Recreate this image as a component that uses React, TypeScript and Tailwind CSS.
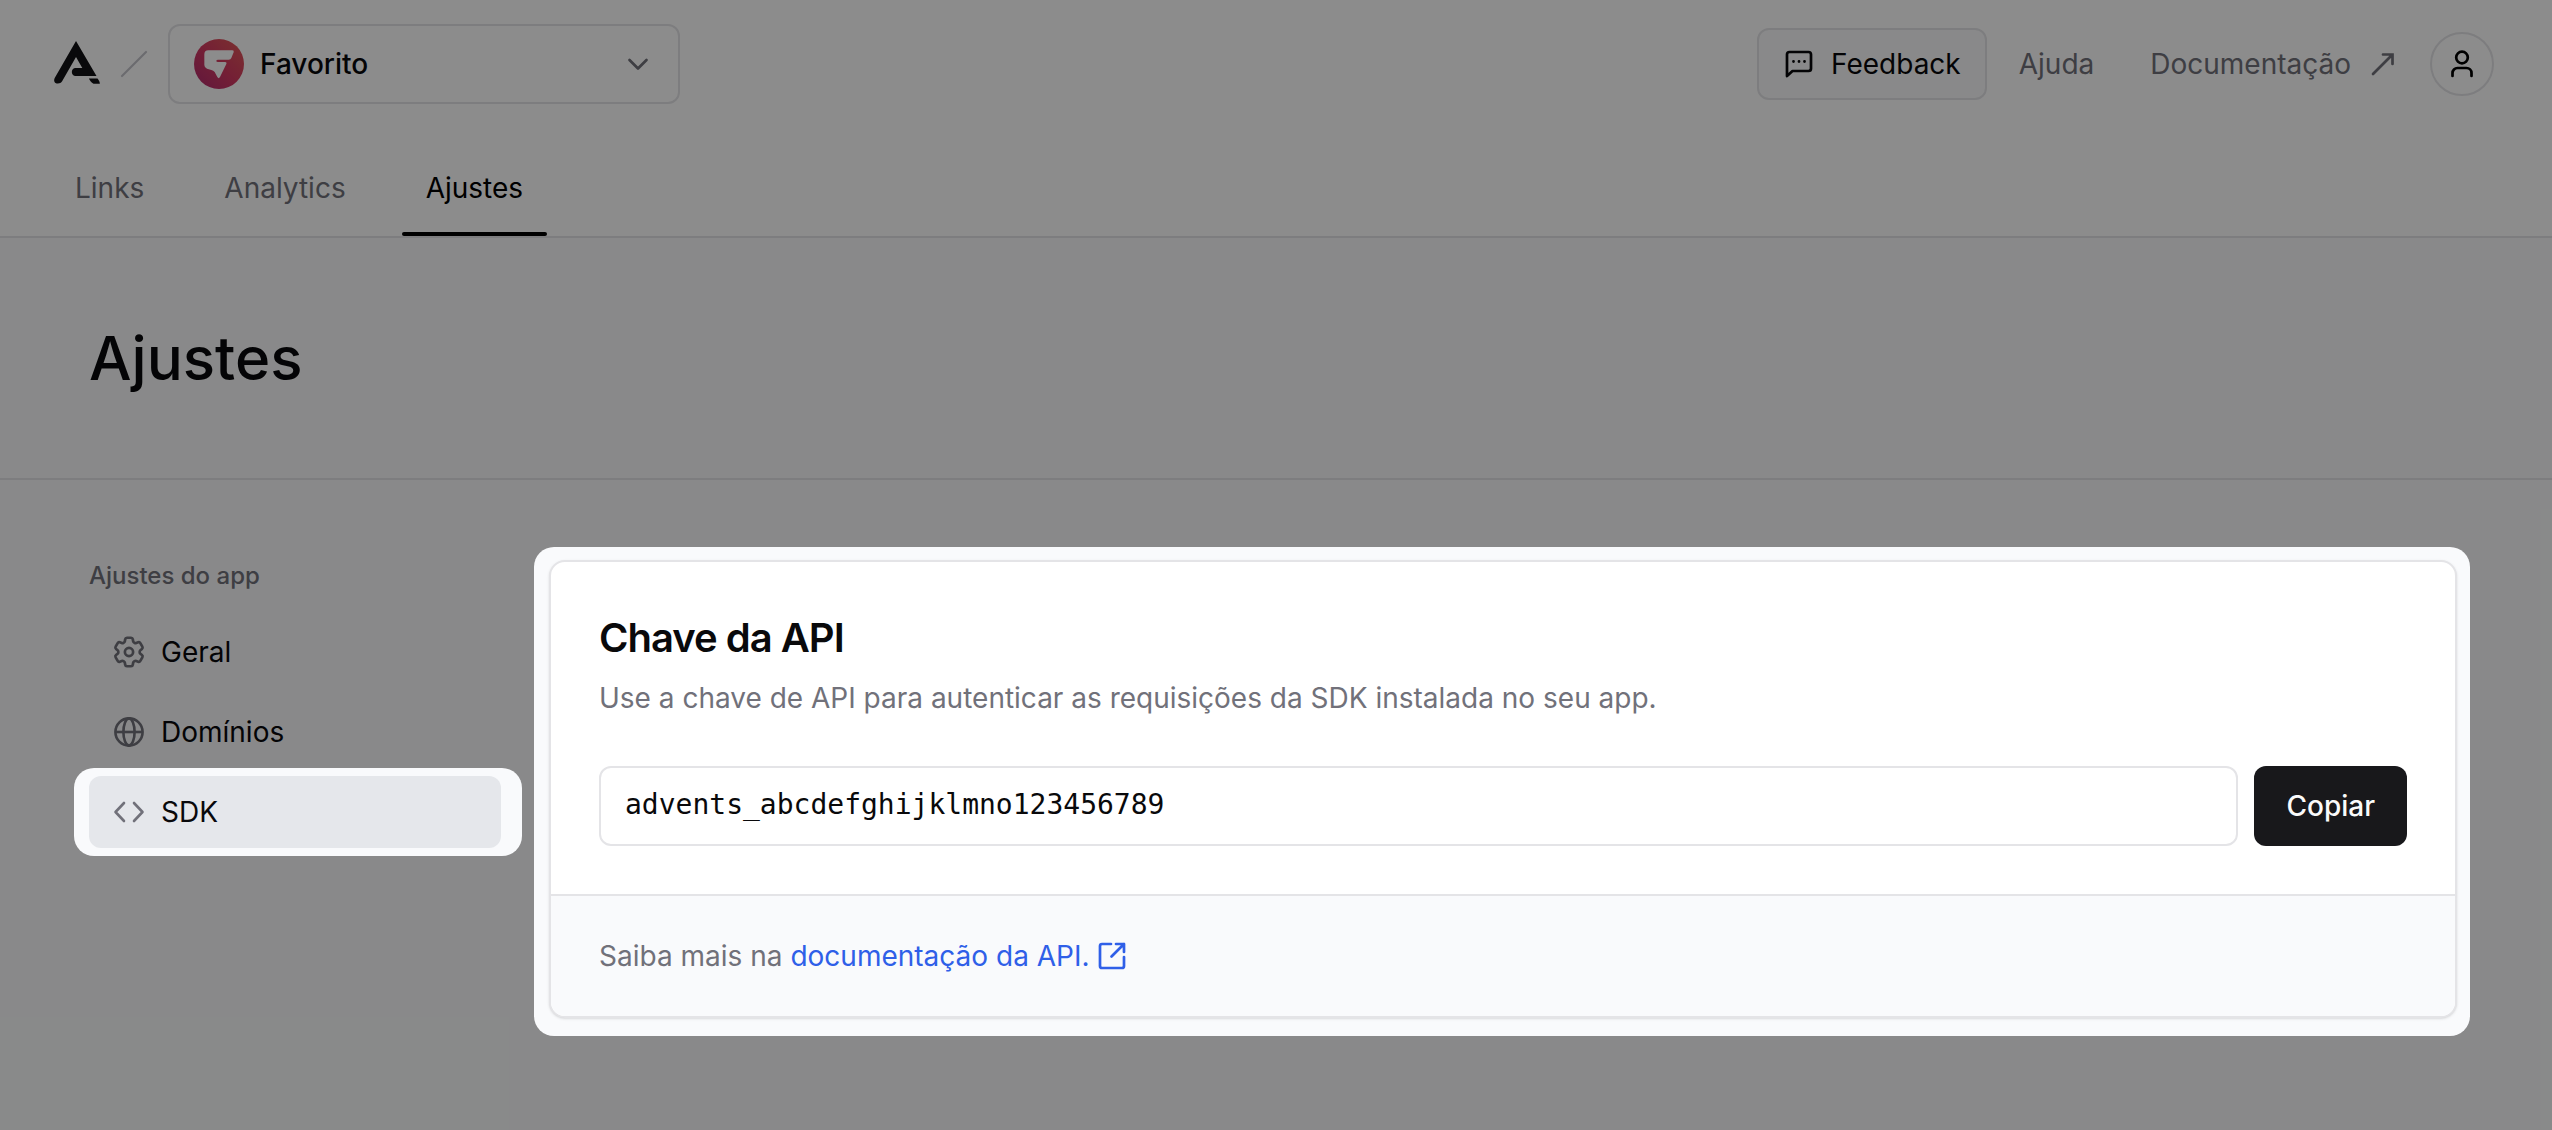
import React from "react";

const tabs = [
  {label: "Links", active: false},
  {label: "Analytics", active: false},
  {label: "Ajustes", active: true},
];

const Logo = () => (
  <svg viewBox="42 60 138 130" className="mb-1 h-[43px] w-[46px] shrink-0 text-[#121214]" fill="currentColor">
    <path d="M108 60 170 166H107C92 166 91 142 107 142H127L108 108 66 182C62 189 52 190 46 187 41 183 41 177 44 171Z" />
    <path d="M147 173H173C178 179 180 183 180 189H161C154 185 150 180 147 173Z" />
  </svg>
);

const AppIcon = () => (
  <svg viewBox="462 57 150 150" className="h-[50px] w-[50px] shrink-0">
    <defs>
      <linearGradient id="app-icon" x1="1" y1="0" x2="0" y2="1">
        <stop offset="0.1" stopColor="#de5458" />
        <stop offset="0.5" stopColor="#d43a62" />
        <stop offset="0.9" stopColor="#b62e6c" />
      </linearGradient>
    </defs>
    <circle cx="537" cy="132" r="75" fill="url(#app-icon)" />
    <path
      d="M505 91H577Q583 91 581 97L574 114Q572 119 566 119H534Q529 119 529 123 529 126 534 126H556Q562 127 559 132L540 171Q536 178 532 171L524 156Q520 151 514 150L501 146Q493 143 493 135V103Q493 91 505 91Z"
      fill="#fff"
    />
  </svg>
);

const GearIcon = () => (
  <svg viewBox="0 0 24 24" className="h-[38px] w-[38px] shrink-0" fill="none" stroke="currentColor" strokeWidth="1.7" strokeLinejoin="round">
    <path d="M9.594 3.94c.09-.542.56-.94 1.11-.94h2.593c.55 0 1.02.398 1.11.94l.213 1.281c.063.374.313.686.645.87.074.04.147.083.22.127.325.196.72.257 1.075.124l1.217-.456a1.125 1.125 0 0 1 1.37.49l1.296 2.247a1.125 1.125 0 0 1-.26 1.431l-1.003.827c-.293.241-.438.613-.43.992a7.723 7.723 0 0 1 0 .255c-.008.378.137.75.43.991l1.004.827c.424.35.534.955.26 1.43l-1.298 2.247a1.125 1.125 0 0 1-1.369.491l-1.217-.456c-.355-.133-.75-.072-1.076.124a6.47 6.47 0 0 1-.22.128c-.331.183-.581.495-.644.869l-.213 1.281c-.09.543-.56.94-1.11.94h-2.594c-.55 0-1.019-.398-1.11-.94l-.213-1.281c-.062-.374-.312-.686-.644-.87a6.52 6.52 0 0 1-.22-.127c-.325-.196-.72-.257-1.076-.124l-1.217.456a1.125 1.125 0 0 1-1.369-.49l-1.297-2.247a1.125 1.125 0 0 1 .26-1.431l1.004-.827c.292-.24.437-.613.43-.991a6.932 6.932 0 0 1 0-.255c.007-.38-.138-.751-.43-.992l-1.004-.827a1.125 1.125 0 0 1-.26-1.43l1.297-2.247a1.125 1.125 0 0 1 1.37-.491l1.216.456c.356.133.751.072 1.076-.124.072-.044.146-.086.22-.128.332-.183.582-.495.644-.869l.214-1.28Z" />
    <circle cx="12" cy="12" r="2.6" />
  </svg>
);

const GlobeIcon = () => (
  <svg viewBox="0 0 32 32" className="h-8 w-8" fill="none" stroke="currentColor" strokeWidth="2.6">
    <circle cx="16" cy="16" r="13.6" />
    <ellipse cx="16" cy="16" rx="5.6" ry="13.6" />
    <path d="M2.4 16h27.2" />
  </svg>
);

const CodeIcon = () => (
  <svg viewBox="0 0 32 32" className="h-8 w-8" fill="none" stroke="currentColor" strokeWidth="2.6" strokeLinecap="round" strokeLinejoin="round">
    <path d="M11 7 2.5 16l8.5 9M21 7l8.5 9-8.5 9" />
  </svg>
);

const FeedbackIcon = () => (
  <svg viewBox="0 0 32 32" className="h-8 w-8" fill="none" stroke="currentColor" strokeWidth="2.7" strokeLinejoin="round">
    <path d="M4 28V6.5A2.5 2.5 0 0 1 6.5 4h19A2.5 2.5 0 0 1 28 6.5v14a2.5 2.5 0 0 1-2.5 2.5h-16Z" />
    <path d="M10.5 13.5h.01M16 13.5h.01M21.5 13.5h.01" strokeWidth="2.8" strokeLinecap="round" />
  </svg>
);

const ArrowIcon = () => (
  <svg viewBox="0 0 24 24" className="h-6 w-6" fill="none" stroke="currentColor" strokeWidth="2.7" strokeLinecap="round">
    <path d="M2 22 21 3M12 2.5h9.5V12" />
  </svg>
);

const UserIcon = () => (
  <svg viewBox="0 0 32 32" className="h-8 w-8" fill="none" stroke="currentColor" strokeWidth="2.7" strokeLinecap="round">
    <circle cx="16" cy="9.5" r="5.8" />
    <path d="M6.5 28v-3a5 5 0 0 1 5-5h9a5 5 0 0 1 5 5v3" />
  </svg>
);

const ExternalIcon = () => (
  <svg viewBox="0 0 28 28" className="h-7 w-7" fill="none" stroke="currentColor" strokeWidth="2.7" strokeLinecap="round" strokeLinejoin="round">
    <path d="M13 2H4a2 2 0 0 0-2 2v20a2 2 0 0 0 2 2h20a2 2 0 0 0 2-2v-9" />
    <path d="M18 2h8v8M26 2 13.5 14.5" />
  </svg>
);

const menu = [
  {label: "Geral", icon: <GearIcon />, active: false},
  {label: "Domínios", icon: <GlobeIcon />, active: false},
  {label: "SDK", icon: <CodeIcon />, active: true},
];

const Header = () => (
  <header className="border-b-2 border-[#e4e4e7] bg-white">
    <div className="flex h-32 items-center justify-between pr-[58px] pl-[54px]">
      <div className="flex items-center">
        <Logo />
        <svg viewBox="0 0 28 28" className="mx-5 h-7 w-7 text-[#c4c4ca]" fill="none" stroke="currentColor" strokeWidth="2.2" strokeLinecap="round">
          <path d="M2 26 26 2" />
        </svg>
        <button type="button" className="flex h-20 w-[512px] items-center rounded-xl border-2 border-[#e4e4e7] px-6 font-medium">
          <AppIcon />
          <span className="ml-4">Favorito</span>
          <svg viewBox="0 0 32 32" className="ml-auto h-8 w-8 text-[#71717a]" fill="none" stroke="currentColor" strokeWidth="2.7" strokeLinecap="round" strokeLinejoin="round">
            <path d="m7.5 12 8.5 8.5 8.5-8.5" />
          </svg>
        </button>
      </div>

      <div className="flex items-center text-[#71717a]">
        <button type="button" className="flex h-[72px] items-center gap-4 rounded-xl border-2 border-[#e4e4e7] bg-[#f9fafb] px-6 text-[#09090b]">
          <FeedbackIcon />
          Feedback
        </button>
        <a href="#ajuda" className="ml-8">Ajuda</a>
        <a href="#docs" className="ml-14 flex items-center gap-5">
          Documentação
          <ArrowIcon />
        </a>
        <button type="button" aria-label="Conta" className="ml-[35px] flex h-16 w-16 items-center justify-center rounded-full border-2 border-[#e4e4e7] text-black">
          <UserIcon />
        </button>
      </div>
    </div>

    <nav className="mt-3 flex gap-8 px-[51px]">
      {tabs.map((t) => (
        <a
          key={t.label}
          href={`#${t.label.toLowerCase()}`}
          className={`relative flex h-24 items-center px-6 ${t.active ? "text-black" : "text-[#71717a]"}`}
        >
          {t.label}
          {t.active && <span className="absolute inset-x-0 bottom-0 h-1 rounded-xs bg-black" />}
        </a>
      ))}
    </nav>
  </header>
);

const Sidebar = () => (
  <nav className="w-[448px] shrink-0">
    <h2 className="mb-[18px] pl-[15px] text-[24px] leading-9 font-medium text-[#71717a]">Ajustes do app</h2>
    <ul>
      {menu.map((m) => (
        <li
          key={m.label}
          className={`pr-[21px] pl-[15px] ${m.active ? "relative z-20 -my-1 rounded-[20px] bg-[#f9fafc] py-2" : "py-1"}`}
        >
          <a
            href={`#${m.label.toLowerCase()}`}
            className={`flex h-[72px] items-center gap-4 rounded-xl px-6 text-[#09090b] ${m.active ? "bg-[#e5e7eb]" : ""}`}
          >
            <span className="flex w-8 justify-center text-[#71717a]">{m.icon}</span>
            {m.label}
          </a>
        </li>
      ))}
    </ul>
  </nav>
);

const ApiKeyCard = () => (
  <section className="overflow-hidden rounded-2xl border-2 border-[#e4e4e7] bg-white shadow">
    <div className="p-12">
      <h3 className="text-[40px] leading-[56px] font-semibold tracking-tight text-[#09090b]">Chave da API</h3>
      <label htmlFor="api-key" className="mt-3 block text-[#71717a]">
        Use a chave de API para autenticar as requisições da SDK instalada no seu app.
      </label>
      <div className="mt-12 flex gap-4">
        <input
          id="api-key"
          readOnly
          value="advents_abcdefghijklmno123456789"
          className="h-20 min-w-0 flex-1 rounded-xl border-2 border-[#e4e4e7] px-6 pb-1 font-['DejaVu_Sans_Mono',monospace] text-[#09090b]"
        />
        <button type="button" className="h-20 rounded-xl bg-[#18181b] px-8 font-medium text-[#fafafa]">
          Copiar
        </button>
      </div>
    </div>
    <div className="flex h-[122px] items-center border-t-2 border-[#e4e4e7] bg-[#f9fafc] px-12 text-[#71717a]">
      <p className="flex items-center">
        <span className="mr-2">Saiba mais na</span>
        <a href="#api-docs" className="flex items-center gap-2 text-[#2f5fe8]">
          documentação da API.
          <ExternalIcon />
        </a>
      </p>
    </div>
  </section>
);

export default function App() {
  return (
    <div className="relative min-h-screen bg-[#f9fafb] font-['Inter',sans-serif] text-[28px] leading-10 text-[#09090b]">
      <Header />
      <div className="border-b-2 border-[#e4e4e7] px-[89px] py-[84px]">
        <h1 className="text-[60px] leading-[72px] font-medium">Ajustes</h1>
      </div>
      <main className="flex gap-3 pr-[82px] pl-[74px]">
        <div className="pt-[78px]">
          <Sidebar />
        </div>
        <div className="relative z-20 mt-[67px] min-w-0 flex-1 self-start rounded-[20px] bg-[#f9fafc] pt-[13px] pr-[13px] pb-[18px] pl-[15px]">
          <ApiKeyCard />
        </div>
      </main>
      {/* dims everything but the highlighted areas */}
      <div className="pointer-events-none absolute inset-0 z-10 bg-black/45" />
    </div>
  );
}
